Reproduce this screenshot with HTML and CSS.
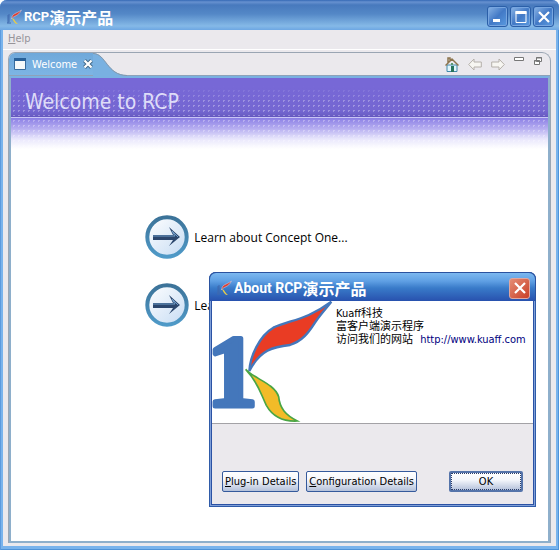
FILE: index.html
```html
<!DOCTYPE html>
<html lang="zh-CN">
<head>
  <meta charset="UTF-8">
  <title>RCP演示产品</title>
  <link rel="stylesheet" href="styles.css">
</head>
<body>

  <!-- Shared shapes -->
  <svg class="defs" width="0" height="0" aria-hidden="true">
    <defs>
      <linearGradient id="ring" x1="0" y1="0" x2="0" y2="1">
        <stop offset="0" stop-color="#3c7399"/>
        <stop offset="1" stop-color="#4f9ac8"/>
      </linearGradient>
      <linearGradient id="disc" x1="0" y1="0" x2="1" y2="1">
        <stop offset="0" stop-color="#ffffff"/>
        <stop offset="1" stop-color="#c5dbf3"/>
      </linearGradient>
      <symbol id="arrow" viewBox="0 0 44 44">
        <circle cx="22" cy="22" r="19.7" fill="url(#disc)" stroke="url(#ring)" stroke-width="4"/>
        <path d="M8 20h20l-4-8 11 10-11 9 4-6H8z" fill="#2b466d"/>
        <path d="M8 21h22l-3-5 6 6" fill="none" stroke="#6f9cc8"/>
      </symbol>
      <symbol id="app" viewBox="0 0 16 16">
        <path d="M2 6v8M1 14h4M3 5v8" fill="none" stroke="#3f68ae"/>
        <path d="M5.500 10C6 4 10 5 15.500 1 12 8 8 6 5.500 10z" fill="#e33c2b" stroke="#b9cff0" stroke-width=".6"/>
        <path d="M6 9c3 1 3 4 6 6-3 0-4-2-6-6z" fill="#e9cd47"/>
      </symbol>
      <symbol id="cross" viewBox="0 0 12 12">
        <path d="M1 1l10 10M11 1L1 11" fill="none" stroke="#fff" stroke-width="2.2"/>
      </symbol>
    </defs>
  </svg>

  <div class="window">
    <!-- Title bar -->
    <div class="titlebar">
      <svg class="app-icon"><use href="#app"/></svg>
      <div class="title">RCP<span class="cjk">演示产品</span></div>
      <div class="window-buttons">
        <button class="win-btn" aria-label="Minimize"><svg viewBox="0 0 12 12"><path d="M1 9.5h7" stroke="#fff" stroke-width="3"/></svg></button>
        <button class="win-btn" aria-label="Maximize"><svg viewBox="0 0 12 12"><path d="M1 .5h10v11H1z" fill="none" stroke="#fff"/><path d="M.5 1.5h11" stroke="#fff" stroke-width="3"/></svg></button>
        <button class="win-btn" aria-label="Close"><svg><use href="#cross"/></svg></button>
      </div>
    </div>

    <div class="menubar"><button class="menu"><u>H</u>elp</button></div>

    <!-- Welcome view -->
    <div class="workarea">
      <div class="folder">
        <div class="tabs">
          <div class="tab">
            <svg class="view-icon" viewBox="0 0 12 12"><path d="M.5.5h11v11H.5z" fill="#f5f9fa" stroke="#386b9c"/><path d="M0 1.5h12" stroke="#286098" stroke-width="3"/></svg>
            <span>Welcome</span>
            <button class="tab-close" aria-label="Close Welcome"><svg viewBox="0 0 10 10"><path d="M1.500 1.500l7 7M8.500 1.500l-7 7" stroke="#426988" stroke-width="4"/><path d="M1.500 1.500l7 7M8.500 1.500l-7 7" stroke="#fff" stroke-width="2.200"/></svg></button>
          </div>
          <svg class="tab-curve" viewBox="0 0 34 23"><path d="M0 0C13 0 14 22 34 22V23H0z" fill="#79b1e1"/><path d="M0 .5C13 .5 14 22.500 34 22.500" fill="none" stroke="#8798a8"/></svg>
          <div class="tools">
            <button class="tool" aria-label="Home"><svg viewBox="0 0 14 15"><path d="M2 8h10v6.500H2z" fill="#e2f5fb" stroke="#4089ab"/><path d="M.5 8.500L7 2l6.500 6.500M3 6V1h2v3" fill="none" stroke="#8c744d" stroke-width="1.500"/><path d="M6 9h3v6H6z" fill="#28735b"/><path d="M6 6h2v2H6z" fill="#5d9c74"/></svg></button>
            <button class="tool" aria-label="Back"><svg viewBox="0 0 14 15"><path d="M.7 7.500L6 2v3h7.300v5H6v3z" fill="#f7f6f2" stroke="#b5b0aa"/></svg></button>
            <button class="tool" aria-label="Forward"><svg viewBox="0 0 14 15"><path d="M13.300 7.500L8 2v3H.7v5H8v3z" fill="#f7f6f2" stroke="#b5b0aa"/></svg></button>
            <button class="tool small" aria-label="Minimize view"><svg viewBox="0 0 10 10"><path d="M.5.500h9v3h-9z" fill="#fff" stroke="#777"/></svg></button>
            <button class="tool small" aria-label="Restore view"><svg viewBox="0 0 10 10"><path d="M3.500.500h5v4h-5zM1.500 3.500h5v4h-5z" fill="#fff" stroke="#777"/><path d="M3 1h6M1 4h6" stroke="#777"/></svg></button>
          </div>
        </div>

        <div class="page">
          <div class="banner"><h1>Welcome to RCP</h1></div>
          <div class="links">
            <a href="#one"><svg><use href="#arrow"/></svg>Learn about Concept One...</a>
            <a href="#two"><svg><use href="#arrow"/></svg>Learn</a>
          </div>
        </div>
      </div>
    </div>

    <!-- About dialog -->
    <div class="dialog" role="dialog" aria-label="About RCP演示产品">
      <div class="dialog-title">
        <svg class="app-icon"><use href="#app"/></svg>
        <div class="title">About RCP<span class="cjk">演示产品</span></div>
        <button class="win-btn red" aria-label="Close"><svg><use href="#cross"/></svg></button>
      </div>
      <div class="about">
        <svg class="logo" viewBox="0 0 120 122">
          <text x="-5" y="105" class="logo-one">1</text>
          <g transform="scale(.3333) translate(-36 -108)">
            <path d="M148 318C150 275 178 212 220 188C270 165 320 165 394 110C368 143 358 152 343 176C325 204 306 229 270 240C220 245 180 255 148 318z" fill="#e93c24" stroke="#4477bb" stroke-width="7"/>
            <path d="M137 313C160 340 223 355 236 395C239 430 257 450 292 468C250 470 217 453 199 421C184 391 175 352 137 313z" fill="#f2bb28" stroke="#4aa544" stroke-width="5"/>
          </g>
        </svg>
        <div class="about-text">
          <div>Kuaff科技</div>
          <div>富客户端演示程序</div>
          <div>访问我们的网站 <a href="http://www.kuaff.com">http://www.kuaff.com</a></div>
        </div>
      </div>
      <div class="actions">
        <button><u>P</u>lug-in Details</button>
        <button><u>C</u>onfiguration Details</button>
        <button class="ok">OK</button>
      </div>
    </div>
  </div>

</body>
</html>
```
FILE: styles.css
```css
* {
  box-sizing: border-box;
}

body {
  margin: 0;
  background: #fff;
  font-family: "DejaVu Sans Condensed", "Noto Sans CJK SC", sans-serif;
  font-size: 11px;
  color: #000;
}

button {
  font: inherit;
  padding: 0;
  border: none;
  background: none;
}

svg {
  display: block;
  flex: none;
}

.defs {
  position: absolute;
}

/* Main window */
.window {
  position: relative;
  display: flex;
  flex-direction: column;
  height: 100vh;
  min-height: 500px;
  padding: 0 3px 4px;
  border-radius: 7px 7px 0 0;
  background: #79b3ec;
  box-shadow: inset 1px 0 #5c9ade, inset -1px -1px #4f93d8;
  overflow: hidden;
}

.titlebar {
  display: flex;
  align-items: center;
  height: 30px;
  margin: 0 -3px;
  padding: 3px 5px 0 6px;
  background: linear-gradient(#3569b5 0, #6791d0 2px, #4779bd 5px, #5488c7 14px, #85b9e7 26px, #6da7e3 30px);
}

.app-icon {
  width: 16px;
  height: 16px;
}

.title {
  display: flex;
  align-items: center;
  margin-left: 2px;
  color: #fff;
  font-family: Roboto, sans-serif;
  font-size: 13px;
  font-weight: bold;
  line-height: 20px;
}

.title .cjk {
  font-family: "Noto Sans CJK SC", sans-serif;
  font-size: 16px;
}

.window-buttons {
  display: flex;
  gap: 2px;
  margin-left: auto;
}

.win-btn {
  display: flex;
  align-items: center;
  justify-content: center;
  width: 21px;
  height: 21px;
  border: 1px solid #2b5fa8;
  border-radius: 3px;
  background: linear-gradient(135deg, #8ab4e5, #4279c6 50%, #5a9be0);
  box-shadow: inset 0 0 0 1px #77a5df;
}

.win-btn svg {
  width: 12px;
  height: 12px;
}

.menubar {
  height: 20px;
  background: #ebe9ed;
  border-bottom: 1px solid #fff;
}

.menu {
  display: block;
  padding: 0 5px;
  line-height: 18px;
  color: #96949a;
}

/* Welcome view */
.workarea {
  flex: 1;
  display: flex;
  padding: 2px 5px 3px;
  background: #ebe9ed;
}

.folder {
  flex: 1;
  display: flex;
  flex-direction: column;
  border: solid #9aa5b3;
  border-width: 1px 1px 0;
  border-radius: 7px 9px 0 0;
  overflow: hidden;
}

.tabs {
  display: flex;
  height: 23px;
  border-bottom: 1px solid #8ea2b9;
}

.tab {
  display: flex;
  align-items: center;
  gap: 6px;
  padding-left: 5px;
  background: linear-gradient(#6fa8da, #7db5e4);
  color: #fff;
}

.tab-close svg {
  width: 10px;
  height: 10px;
}

.view-icon {
  width: 12px;
  height: 12px;
}

.tab-curve {
  width: 34px;
  height: 23px;
}

.tools {
  display: flex;
  align-items: flex-start;
  gap: 9px;
  margin-left: auto;
  padding: 4px 7px 0 0;
}

.tool {
  width: 14px;
  height: 15px;
}

.small {
  width: 10px;
  height: 10px;
}

.small svg {
  width: 10px;
  height: 10px;
}

.page {
  flex: 1;
  border: 2px solid #8eafcb;
  border-top-color: #79b1e1;
  background: #fff;
}

.banner {
  height: 72px;
  background:
    linear-gradient(transparent 38px, #5f52bb 38px, #6a5ec5 39px, #c9c5f5 39px, #c9c5f5 40px, transparent 40px),
    linear-gradient(#7768d6 8px, transparent 24px),
    radial-gradient(circle, rgba(255, 255, 255, 0.3) 1px, transparent 1px) 0 0 / 5px 5px,
    linear-gradient(#7768d6 0, #7567d2 32px, #685cc2 39px, #8b7fe5 40px, #b8b0f1 51px, #e9e7fc 61px, #fff 71px);
}

h1 {
  margin: 0;
  padding-left: 14px;
  color: #dedcf8;
  font-size: 21px;
  font-weight: normal;
  line-height: 48px;
}

.links {
  display: flex;
  flex-direction: column;
  align-items: flex-start;
  gap: 24px;
  padding: 65px 0 0 25%;
}

.links a {
  display: flex;
  align-items: center;
  gap: 5px;
  color: #000;
  font-family: "Open Sans", sans-serif;
  font-size: 12px;
  text-decoration: none;
}

.links svg {
  width: 44px;
  height: 44px;
}

/* About dialog */
.dialog {
  position: absolute;
  right: 23px;
  bottom: 43px;
  width: 327px;
  padding: 0 3px 3px;
  border-radius: 7px 7px 0 0;
  background: #2b52a4;
  box-shadow: inset 0 0 0 1px #2f5ba8, inset 0 0 0 2px #7f9fd8;
}

.dialog-title {
  display: flex;
  align-items: center;
  height: 29px;
  margin: 0 -3px;
  padding: 2px 5px 0 6px;
  border: 1px solid #2a529f;
  border-bottom: none;
  border-radius: 7px 7px 0 0;
  background: linear-gradient(#7cb8f0 0, #60a0e4 8px, #397bc9 15px, #2851ae 28px);
}

.dialog-title .title {
  font-size: 14px;
}

.dialog .win-btn {
  margin-left: auto;
}

.win-btn.red {
  border-color: #e0a7a0;
  background: linear-gradient(135deg, #e58d75, #c93f27);
  box-shadow: none;
}

.about {
  display: flex;
  height: 123px;
  background: #fff;
  border-bottom: 1px solid #a3a2a6;
}

.logo {
  width: 120px;
  height: 122px;
  overflow: visible;
}

.logo-one {
  font-family: "Liberation Serif", serif;
  font-size: 101px;
  font-weight: bold;
  fill: #4477bb;
  stroke: #4477bb;
  stroke-width: 5px;
  stroke-linejoin: round;
}

.about-text {
  padding: 6px 0 0 4px;
  line-height: 13px;
  white-space: nowrap;
}

.about-text a {
  margin-left: 4px;
  color: #000080;
  text-decoration: none;
}

.actions {
  display: flex;
  gap: 7px;
  padding: 47px 10px 12px;
  background: #ebe9ed;
}

.actions button {
  height: 21px;
  padding: 0 2px;
  border: 1px solid #355a9c;
  border-radius: 2px;
  background: linear-gradient(#fff, #f5f7fc 40%, #b4c1da);
  white-space: nowrap;
}

.actions .ok {
  width: 74px;
  margin-left: auto;
  border-width: 2px;
  border-color: #5574aa;
  outline: 1px dotted #2c3e6a;
  outline-offset: -3px;
}
```
